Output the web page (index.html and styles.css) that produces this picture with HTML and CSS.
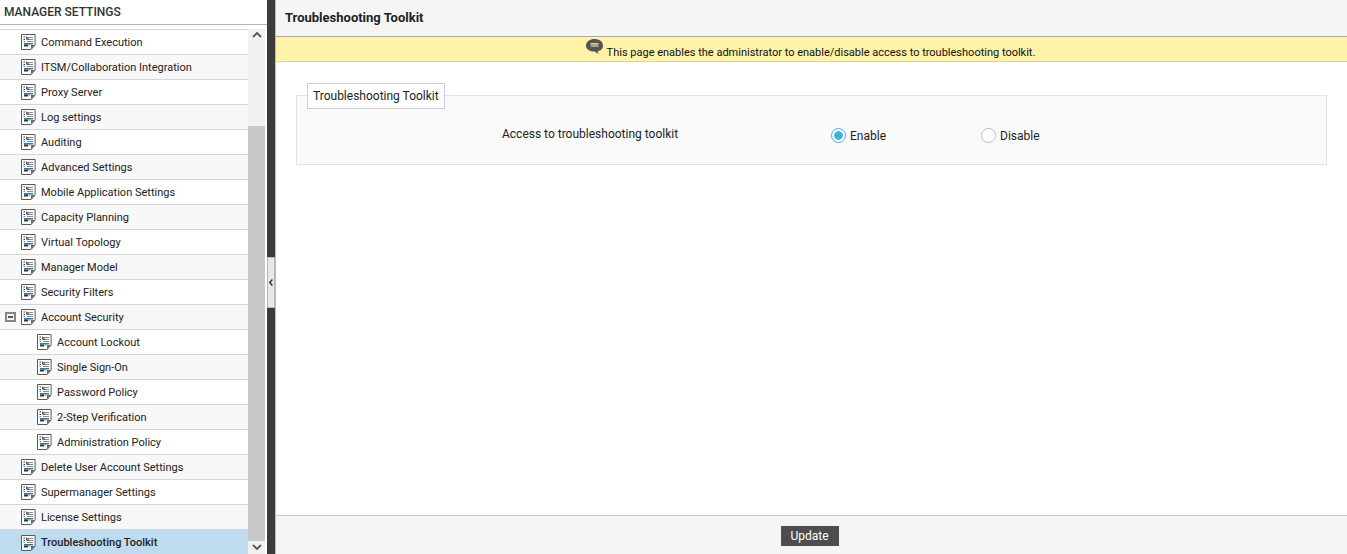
FILE: index.html
```html
<!DOCTYPE html>
<html lang="en">
<head>
    <meta charset="UTF-8">
    <title>Troubleshooting Toolkit</title>
    <link rel="stylesheet" href="styles.css">
</head>
<body>
    <svg class="icon-defs" width="0" height="0">
        <symbol id="page" viewBox="0 0 15 16">
            <path d="M.5.5h13.600v10.500l-4 4.500H.5z" fill="#fff" stroke="#5a5a5a"/>
            <path d="M10 15.500V11h4.500z" fill="#6e6e6e"/>
            <path d="M6 3.500h6M6 5.500h6M6 7.500h6" stroke="#8c8c8c"/>
            <path d="M5.200 2.500h1v2h2v1h-3z" fill="#333"/>
            <path d="M2.500 2.500h1.500v1H2.500zM2.500 5h1.500v1H2.500z" fill="#333"/>
            <path d="M2.500 7h1.500v1H2.500z" fill="#3a7fc4"/>
            <path d="M3 9h9v1.500H3z" fill="#1f78d0"/>
            <path d="M3 10.500h4v2H3z" fill="#3a3a20"/>
            <path d="M7 10.500h2.500v1H7z" fill="#d98a20"/>
        </symbol>
    </svg>

    <aside class="sidebar">
        <div class="sidebar-title">MANAGER SETTINGS</div>
        <div class="sidebar-body">
            <ul class="tree">
                <li class="row"><svg class="page-icon"><use href="#page"/></svg>Command Execution</li>
                <li class="row alt"><svg class="page-icon"><use href="#page"/></svg>ITSM/Collaboration Integration</li>
                <li class="row"><svg class="page-icon"><use href="#page"/></svg>Proxy Server</li>
                <li class="row alt"><svg class="page-icon"><use href="#page"/></svg>Log settings</li>
                <li class="row"><svg class="page-icon"><use href="#page"/></svg>Auditing</li>
                <li class="row alt"><svg class="page-icon"><use href="#page"/></svg>Advanced Settings</li>
                <li class="row"><svg class="page-icon"><use href="#page"/></svg>Mobile Application Settings</li>
                <li class="row alt"><svg class="page-icon"><use href="#page"/></svg>Capacity Planning</li>
                <li class="row"><svg class="page-icon"><use href="#page"/></svg>Virtual Topology</li>
                <li class="row alt"><svg class="page-icon"><use href="#page"/></svg>Manager Model</li>
                <li class="row"><svg class="page-icon"><use href="#page"/></svg>Security Filters</li>
                <li class="row alt">
                    <span class="collapse-box"></span>
                    <svg class="page-icon"><use href="#page"/></svg>Account Security
                </li>
                <li class="row child"><svg class="page-icon"><use href="#page"/></svg>Account Lockout</li>
                <li class="row child alt"><svg class="page-icon"><use href="#page"/></svg>Single Sign-On</li>
                <li class="row child"><svg class="page-icon"><use href="#page"/></svg>Password Policy</li>
                <li class="row child alt"><svg class="page-icon"><use href="#page"/></svg>2-Step Verification</li>
                <li class="row child"><svg class="page-icon"><use href="#page"/></svg>Administration Policy</li>
                <li class="row alt"><svg class="page-icon"><use href="#page"/></svg>Delete User Account Settings</li>
                <li class="row"><svg class="page-icon"><use href="#page"/></svg>Supermanager Settings</li>
                <li class="row alt"><svg class="page-icon"><use href="#page"/></svg>License Settings</li>
                <li class="row selected"><svg class="page-icon"><use href="#page"/></svg>Troubleshooting Toolkit</li>
            </ul>
            <div class="scrollbar">
                <svg class="scroll-arrow" viewBox="0 0 10 6"><path d="M1 5l4-4 4 4" fill="none" stroke="#555" stroke-width="1.800"/></svg>
                <div class="scroll-track"><div class="scroll-thumb"></div></div>
                <svg class="scroll-arrow" viewBox="0 0 10 6"><path d="M1 1l4 4 4-4" fill="none" stroke="#555" stroke-width="1.800"/></svg>
            </div>
        </div>
    </aside>

    <div class="divider">
        <div class="divider-handle">
            <svg width="4" height="7" viewBox="0 0 4 7"><path d="M3.400.5L.8 3.500l2.600 3" fill="none" stroke="#333" stroke-width="1.400"/></svg>
        </div>
    </div>

    <main class="content">
        <h1 class="page-title">Troubleshooting Toolkit</h1>
        <div class="notice">
            <svg class="notice-icon" width="17" height="16" viewBox="0 0 17 16">
                <path d="M8.500 0C13 0 17 2.200 17 6.500s-3 5.400-5.400 5.700L12.500 15 8.500 12.500C4 12.500 0 10.500 0 6.500S4 0 8.500 0z" fill="#555"/>
                <path d="M4.500 4.800h8M4.500 7h8" stroke="#fef3a8" stroke-width="1.200"/>
            </svg>
            <span>This page enables the administrator to enable/disable access to troubleshooting toolkit.</span>
        </div>
        <div class="content-body">
            <fieldset class="panel">
                <legend class="panel-legend">Troubleshooting Toolkit</legend>
                <div class="form-row">
                    <div class="form-label">Access to troubleshooting toolkit</div>
                    <label class="radio-option"><span class="radio checked"></span>Enable</label>
                    <label class="radio-option"><span class="radio"></span>Disable</label>
                </div>
            </fieldset>
        </div>
        <div class="actions">
            <button class="update-btn" type="button">Update</button>
        </div>
    </main>
</body>
</html>
```
FILE: styles.css
```css
* {
    margin: 0;
    padding: 0;
    box-sizing: border-box;
}

body {
    display: flex;
    height: 100vh;
    overflow: hidden;
    background: #fff;
    color: #222;
    font-family: Roboto, sans-serif;
    font-size: 12px;
}

.icon-defs {
    position: absolute;
}

.sidebar {
    width: 267px;
    flex-shrink: 0;
    display: flex;
    flex-direction: column;
    background: #fff;
}

.sidebar-title {
    height: 25px;
    padding: 5px 0 0 4px;
    border-bottom: 1px solid #b5b5b5;
    font-size: 12px;
    font-weight: 500;
    line-height: 15px;
    color: #333;
}

.sidebar-body {
    flex: 1;
    display: flex;
    min-height: 0;
    padding-top: 4px;
}

.tree {
    width: 248px;
    flex-shrink: 0;
    list-style: none;
    border-top: 1px solid #d5d5d5;
}

.row {
    height: 25px;
    display: flex;
    align-items: center;
    padding-left: 21px;
    border-bottom: 1px solid #d5d5d5;
    background: #fff;
    font-size: 11px;
    white-space: nowrap;
    position: relative;
}

.row.alt {
    background: #f8f8f8;
}

.row.child {
    padding-left: 37px;
}

.row.selected {
    background: #bedbf0;
    font-weight: 500;
    border-bottom: 0;
}

.page-icon {
    width: 15px;
    height: 16px;
    margin-right: 5px;
    flex-shrink: 0;
}

.collapse-box {
    position: absolute;
    left: 5px;
    top: 7px;
    width: 11px;
    height: 10px;
    border: 2px solid #858585;
    background: linear-gradient(#555, #555) center / 5px 2px no-repeat #f4f4f4;
}

.scrollbar {
    width: 17px;
    flex-shrink: 0;
    display: flex;
    flex-direction: column;
    background: #f1f1f1;
}

.scroll-arrow {
    width: 10px;
    height: 6px;
    margin: 3px auto 4px;
    flex-shrink: 0;
}

.scroll-track {
    flex: 1;
    padding-top: 84px;
    display: flex;
}

.scroll-thumb {
    flex: 1;
    background: #c8c8c8;
}

.divider {
    width: 8px;
    flex-shrink: 0;
    display: flex;
    align-items: center;
    background: #3c3c3c;
}

.divider-handle {
    width: 8px;
    height: 51px;
    margin-top: 11px;
    display: flex;
    align-items: center;
    justify-content: center;
    background: #e8e8e8;
    border: 1px solid #b5b5b5;
}

.content {
    flex: 1;
    display: flex;
    flex-direction: column;
    border-left: 1px solid #bbb;
    min-width: 0;
}

.page-title {
    height: 37px;
    padding: 10px 0 0 9px;
    background: #f5f5f5;
    border-bottom: 1px solid #aaa;
    font-size: 13px;
    font-weight: 700;
    line-height: 16px;
    color: #222;
}

.notice {
    height: 25px;
    display: flex;
    align-items: center;
    justify-content: center;
    gap: 4px;
    padding-right: 2px;
    background: #fef3a8;
    border-bottom: 1px solid #e0d890;
    font-size: 11px;
    color: #111;
}

.notice span {
    padding-top: 7px;
}

.notice-icon {
    margin-top: -4px;
}

.content-body {
    flex: 1;
    padding: 20px 20px 0;
}

.panel {
    height: 83px;
    background: #fafafa;
    border: 1px solid #e2e2e2;
}

/* legend sits a pixel lower than the border centre */
.panel-legend {
    margin-left: 10px;
    height: 26px;
    padding: 0 5px;
    border: 1px solid #ccd;
    background: #fff;
    font-size: 12px;
    line-height: 24px;
    color: #222;
    position: relative;
    top: 1px;
}

.form-row {
    display: grid;
    grid-template-columns: 534px 150px auto;
    padding-top: 19px;
}

.form-label {
    padding-left: 205px;
    font-size: 12px;
}

.radio-option {
    display: flex;
    align-items: center;
    gap: 4px;
    font-size: 12px;
    padding-top: 1px;
}

.radio {
    width: 15px;
    height: 15px;
    border-radius: 50%;
    border: 1px solid #b5bcc8;
    background: #fff;
}

.radio.checked {
    border-color: #45b0e0;
    background: radial-gradient(circle, #45b0e0 0 4px, #fff 4.6px);
}

.actions {
    height: 39px;
    display: flex;
    justify-content: center;
    padding: 10px 4px 0 0;
    background: #f5f5f5;
    border-top: 1px solid #ccc;
}

.update-btn {
    width: 58px;
    height: 20px;
    border: 0;
    background: #4d4d4d;
    color: #fff;
    font-family: Roboto, sans-serif;
    font-size: 12px;
}
```
